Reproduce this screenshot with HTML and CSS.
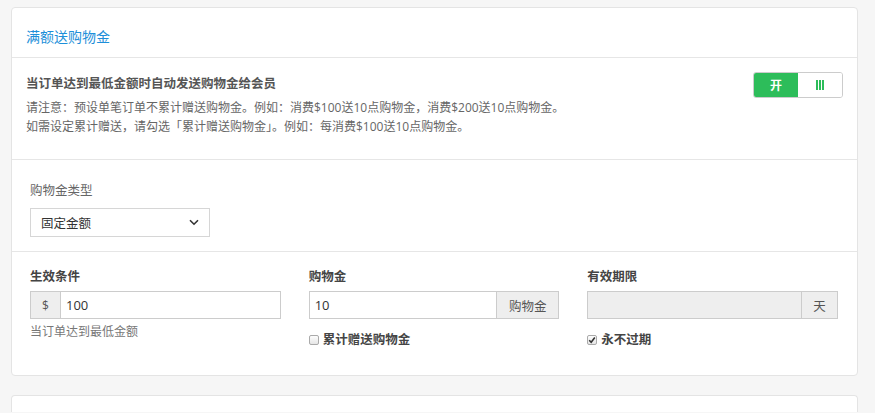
FILE: index.html
```html
<!DOCTYPE html>
<html lang="zh-CN">
<head>
  <meta charset="UTF-8" />
  <meta name="viewport" content="width=device-width, initial-scale=1.0" />
  <title>满额送购物金</title>
  <link rel="stylesheet" href="styles.css">
</head>
<body>
  <div class="card">
    <div class="card-header">满额送购物金</div>

    <div class="section intro">
      <div class="intro-text">
        <div class="intro-title">当订单达到最低金额时自动发送购物金给会员</div>
        <p class="note">请注意：预设单笔订单不累计赠送购物金。例如：消费$100送10点购物金，消费$200送10点购物金。<br>如需设定累计赠送，请勾选「累计赠送购物金」。例如：每消费$100送10点购物金。</p>
      </div>
      <div class="toggle">
        <span class="toggle-on">开</span>
        <span class="toggle-off">
          <svg width="8" height="10" viewBox="0 0 8 10"><rect x="0" y="0" width="2" height="10" fill="#2dbd5a"/><rect x="3" y="0" width="2" height="10" fill="#2dbd5a"/><rect x="6" y="0" width="2" height="10" fill="#2dbd5a"/></svg>
        </span>
      </div>
    </div>

    <div class="section type">
      <div class="field-label">购物金类型</div>
      <div class="select">
        <span>固定金额</span>
        <svg width="10" height="7" viewBox="0 0 10 7"><path d="M1 1.2 L5 5.2 L9 1.2" fill="none" stroke="#333" stroke-width="1.6"/></svg>
      </div>
    </div>

    <div class="section fields">
      <div class="col">
        <div class="col-label">生效条件</div>
        <div class="input-group">
          <span class="addon addon-left">$</span>
          <input class="input" type="text" value="100">
        </div>
        <div class="help">当订单达到最低金额</div>
      </div>
      <div class="col">
        <div class="col-label">购物金</div>
        <div class="input-group">
          <input class="input" type="text" value="10">
          <span class="addon addon-wide">购物金</span>
        </div>
        <label class="check">
          <span class="box"></span>累计赠送购物金
        </label>
      </div>
      <div class="col">
        <div class="col-label">有效期限</div>
        <div class="input-group">
          <input class="input" type="text" value="" disabled>
          <span class="addon addon-day">天</span>
        </div>
        <label class="check">
          <span class="box checked">
            <svg width="8" height="8" viewBox="0 0 8 8"><path d="M1.2 4.2 L3.2 6.2 L6.8 1.6" fill="none" stroke="#333" stroke-width="1.6"/></svg>
          </span>永不过期
        </label>
      </div>
    </div>
  </div>

  <div class="card next"></div>
</body>
</html>
```

FILE: styles.css
```css
body {
  margin: 0;
  padding: 7px 17px 0 11px;
  background: #f6f6f6;
  font-family: "Open Sans", "Noto Sans CJK SC", sans-serif;
  color: #333;
  overflow: hidden;
}
.card {
  background: #fff;
  border: 1px solid #e4e4e4;
  border-radius: 4px;
}
.card.next {
  margin-top: 19px;
  height: 16px;
  border-bottom: none;
  border-radius: 4px 4px 0 0;
}
.card-header {
  padding: 19px 14px 0;
  height: 30px;
  font-size: 14px;
  line-height: 20px;
  color: #1d8fd9;
  border-bottom: 1px solid #e6e6e6;
}
.section {
  border-bottom: 1px solid #e6e6e6;
}
.section:last-child {
  border-bottom: none;
}
.intro {
  display: flex;
  justify-content: space-between;
  align-items: flex-start;
  padding: 16px 14px 23px;
}
.intro-title {
  font-size: 12.5px;
  line-height: 20px;
  font-weight: bold;
  color: #555;
}
.note {
  margin: 4px 0 0;
  font-size: 12px;
  line-height: 19px;
  color: #666;
}
.toggle {
  display: flex;
  width: 88px;
  height: 24px;
  margin-top: -2px;
  border: 1px solid #ccc;
  border-radius: 3px;
  overflow: hidden;
}
.toggle-on, .toggle-off {
  flex: 1;
  display: flex;
  align-items: center;
  justify-content: center;
}
.toggle-on {
  background: #2dbd5a;
  color: #fff;
  font-size: 12px;
  font-weight: bold;
}
.toggle-off {
  background: #fff;
}
.type {
  padding: 22px 18px 14px;
}
.field-label {
  font-size: 12.5px;
  line-height: 18px;
  color: #666;
}
.select {
  display: flex;
  justify-content: space-between;
  align-items: center;
  box-sizing: border-box;
  width: 180px;
  height: 29px;
  margin-top: 8px;
  padding: 0 10px 0 10px;
  border: 1px solid #d6d6d6;
  font-size: 12.5px;
  color: #333;
}
.fields {
  display: grid;
  grid-template-columns: repeat(3, 1fr);
  gap: 28px;
  padding: 16px 19px 26px 18px;
}
.col-label {
  font-size: 12.5px;
  line-height: 18px;
  font-weight: bold;
  color: #444;
}
.input-group {
  display: flex;
  height: 28px;
  margin-top: 5px;
}
.input {
  flex: 1;
  min-width: 0;
  box-sizing: border-box;
  height: 28px;
  margin: 0;
  padding: 0 5px;
  border: 1px solid #ccc;
  border-radius: 0;
  font-family: inherit;
  font-size: 13px;
  color: #333;
  background: #fff;
  outline: none;
}
.input:disabled {
  background: #eee;
}
.addon {
  display: flex;
  align-items: center;
  justify-content: center;
  box-sizing: border-box;
  height: 28px;
  border: 1px solid #ccc;
  background: #eee;
  color: #555;
  font-size: 12.5px;
}
.addon-left {
  width: 30px;
  border-right: none;
  font-size: 12px;
}
.addon-wide {
  width: 62px;
  border-left: none;
}
.addon-day {
  width: 36px;
  border-left: none;
}
.help {
  margin-top: 5px;
  font-size: 12px;
  line-height: 16px;
  color: #777;
}
.check {
  display: flex;
  align-items: center;
  gap: 4px;
  margin-top: 12px;
  font-size: 12.5px;
  line-height: 18px;
  font-weight: bold;
  color: #444;
}
.box {
  display: flex;
  align-items: center;
  justify-content: center;
  box-sizing: border-box;
  width: 10px;
  height: 10px;
  border: 1px solid #aaa;
  border-radius: 2px;
  background: linear-gradient(#fdfdfd, #e6e6e6);
}
```
